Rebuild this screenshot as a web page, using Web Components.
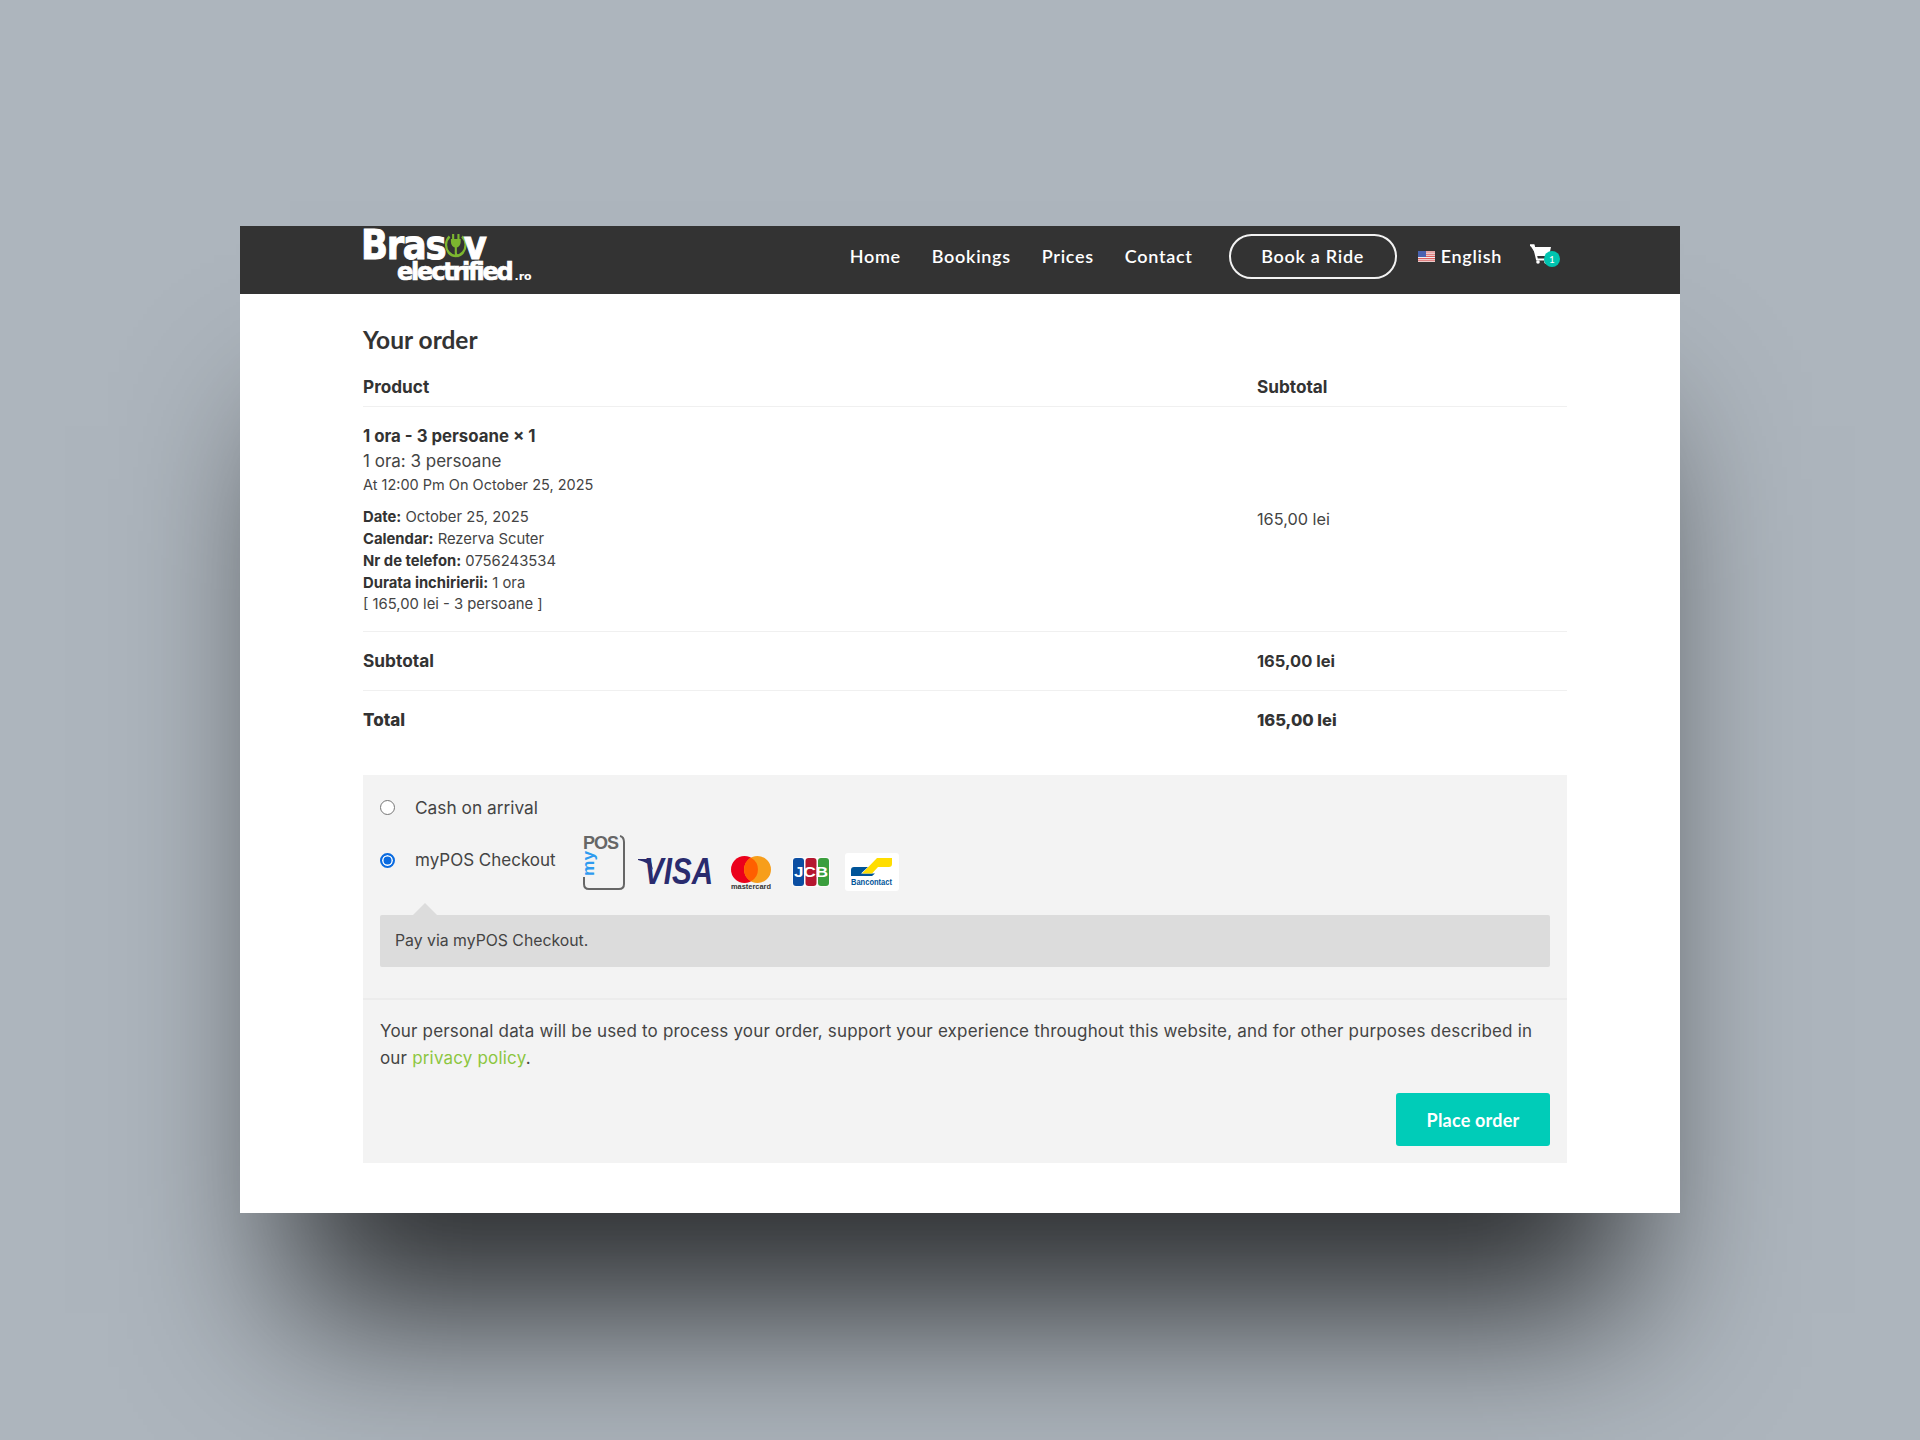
<!DOCTYPE html>
<html>
<head>
<meta charset="utf-8">
<title>Your order</title>
<style>
html,body{margin:0;padding:0;}
body{
    width:1920px;
    height:1440px;
    overflow:hidden;
    background-color:#adb5bd;
    font-family:"Inter","Liberation Sans",sans-serif;
}
</style>
</head>
<body>
<site-window>
    <site-header></site-header>
    <order-summary></order-summary>
    <checkout-payment></checkout-payment>
</site-window>

<script>
const BODY_FONT = '"Inter","Liberation Sans",sans-serif';
const NAV_FONT = '"Lato","Liberation Sans",sans-serif';

class SiteWindow extends HTMLElement{
    constructor(){
        super();
        this.shadowDOM = this.attachShadow({mode: "open"});
    }

    connectedCallback(){
        this.shadowDOM.innerHTML = `
        <style>
        :host{
            display:block;
            box-sizing:border-box;
            width:1440px;
            height:987px;
            margin:226px 0 0 240px;
            background:#fff;
            box-shadow:0 150px 150px -50px rgba(0,0,0,.74);
        }
        </style>
        <slot></slot>`;
    }
}

class SiteHeader extends HTMLElement{
    constructor(){
        super();
        this.shadowDOM = this.attachShadow({mode: "open"});
    }

    connectedCallback(){
        this.shadowDOM.innerHTML = `
        <style>
        :host{
            display:flex;
            box-sizing:border-box;
            height:68px;
            padding:0 122px 0 123px;
            background:#333;
            color:#fff;
            font-family:${NAV_FONT};
            align-items:flex-start;
        }
        .logo{
            width:170px;
            height:58px;
            margin-top:3px;
            display:flex;
            flex-direction:column;
            font-family:"DejaVu Sans",sans-serif;
            font-weight:700;
            white-space:nowrap;
        }
        .logo .big{
            font-size:40px;
            line-height:32px;
            letter-spacing:-1.5px;
            height:32px;
            margin-left:-2px;
            display:flex;
            align-items:center;
            -webkit-text-stroke:1px #fff;
            transform:scaleX(.886);
            transform-origin:left center;
        }
        .logo .big svg{margin:0 -4px 0 -1px;flex:none;}
        .logo .small{
            font-size:24px;
            line-height:21px;
            letter-spacing:-2.2px;
            margin:1px 0 0 34px;
            -webkit-text-stroke:.7px #fff;
            display:flex;
            align-items:baseline;
        }
        .logo .small i{
            font-style:normal;
            font-size:11px;
            letter-spacing:0;
            margin-left:3px;
            -webkit-text-stroke:0;
        }
        nav{
            flex:1;
            display:flex;
            align-items:center;
            justify-content:flex-end;
            height:60px;
            font-size:18px;
            font-weight:600;
            letter-spacing:.7px;
        }
        nav a{color:#fff;text-decoration:none;}
        nav a + a{margin-left:31px;}
        .book{
            box-sizing:border-box;
            width:168px;
            height:45px;
            margin-left:36px;
            border:2px solid #f2f2f2;
            border-radius:23px;
            display:flex;
            align-items:center;
            justify-content:center;
        }
        .lang{
            display:flex;
            align-items:center;
            margin-left:21px;
            gap:6px;
        }
        .cart{
            position:relative;
            width:28px;
            height:26px;
            margin-left:28px;
        }
        .cart svg{display:block;margin-top:1px;}
        .badge{
            position:absolute;
            left:14px;
            top:8px;
            width:16px;
            height:16px;
            border-radius:50%;
            background:#00c4b0;
            color:#fff;
            font:400 10px/16px ${NAV_FONT};
            letter-spacing:0;
            text-align:center;
        }
        </style>
        <div class="logo">
            <div class="big">Bras<svg width="26" height="30" viewBox="0 0 26 30"><path d="M6 6.5a11 11 0 1 0 14 0" fill="none" stroke="#7cb62f" stroke-width="2.6"/><path d="M10 4v5M16 4v5" stroke="#7cb62f" stroke-width="2.4"/><path d="M7.5 9h11v3a5.5 5.5 0 0 1-11 0z" fill="#7cb62f"/><path d="M13 16v7q0 3 3 3" fill="none" stroke="#7cb62f" stroke-width="2.4"/></svg>v</div>
            <div class="small">electrified<i>.ro</i></div>
        </div>
        <nav>
            <a>Home</a>
            <a>Bookings</a>
            <a>Prices</a>
            <a>Contact</a>
            <div class="book">Book a Ride</div>
            <div class="lang">
                <svg width="17" height="11" viewBox="0 0 17 11"><rect width="17" height="11" fill="#f1f1f1"/><path d="M0 1h17M0 3.2h17M0 5.4h17M0 7.6h17M0 9.8h17" stroke="#dc5f5f" stroke-width="1.1"/><rect width="8" height="6" fill="#4a63b0"/></svg>
                <span>English</span>
            </div>
            <div class="cart">
                <svg width="22" height="20" viewBox="0 0 22 20"><path d="M0 1h4l1 2h16l-2 9H7z" fill="#fff"/><path d="M0 1.2h3.6L7 15.5h11" fill="none" stroke="#fff" stroke-width="2"/><circle cx="8" cy="18" r="1.8" fill="#fff"/><circle cx="16" cy="18" r="1.8" fill="#fff"/></svg>
                <span class="badge">1</span>
            </div>
        </nav>`;
    }
}

class OrderSummary extends HTMLElement{
    constructor(){
        super();
        this.shadowDOM = this.attachShadow({mode: "open"});
    }

    connectedCallback(){
        this.shadowDOM.innerHTML = `
        <style>
        :host{
            display:block;
            padding:0 113px 0 123px;
            font-family:${BODY_FONT};
            color:#444;
        }
        h2{
            margin:0;
            padding-top:31px;
            height:41px;
            font-family:${NAV_FONT};
            font-size:24.5px;
            line-height:30px;
            font-weight:700;
            color:#333;
        }
        .row{
            display:grid;
            grid-template-columns:894px 1fr;
            border-bottom:1px solid #f0f0f0;
            box-sizing:border-box;
        }
        .row.head{height:41px;padding-top:9px;font-size:17.2px;font-weight:700;line-height:24px;color:#333;}
        .row.item{height:225px;align-items:center;}
        .row.sum{height:59px;padding-bottom:1px;align-items:center;font-size:17.3px;font-weight:700;color:#333;}
        .row.total{border-bottom:0;height:60px;padding-bottom:2px;align-items:center;font-size:17px;font-weight:800;color:#333;}
        .row .num{font-size:16.5px;}
        .name{font-size:16.8px;font-weight:700;line-height:24px;color:#333;}
        .sub{font-size:17px;line-height:26px;}
        .when{font-size:14.5px;line-height:22px;margin-bottom:10px;}
        .meta{font-size:14.8px;line-height:22px;}
        .meta.last{line-height:20px;}
        .meta b{color:#333;font-weight:700;}
        .price{font-size:16.3px;}
        </style>
        <h2>Your order</h2>
        <div class="row head"><div>Product</div><div>Subtotal</div></div>
        <div class="row item">
            <div>
                <div class="name">1 ora - 3 persoane &times; 1</div>
                <div class="sub">1 ora: 3 persoane</div>
                <div class="when">At 12:00 Pm On October 25, 2025</div>
                <div class="meta"><b>Date:</b> October 25, 2025</div>
                <div class="meta"><b>Calendar:</b> Rezerva Scuter</div>
                <div class="meta"><b>Nr de telefon:</b> 0756243534</div>
                <div class="meta"><b>Durata inchirierii:</b> 1 ora</div>
                <div class="meta last">[ 165,00 lei - 3 persoane ]</div>
            </div>
            <div class="price">165,00 lei</div>
        </div>
        <div class="row sum"><div>Subtotal</div><div class="num">165,00 lei</div></div>
        <div class="row total"><div>Total</div><div class="num">165,00 lei</div></div>`;
    }
}

class CheckoutPayment extends HTMLElement{
    constructor(){
        super();
        this.shadowDOM = this.attachShadow({mode: "open"});
    }

    connectedCallback(){
        this.shadowDOM.innerHTML = `
        <style>
        :host{
            display:block;
            box-sizing:border-box;
            width:1204px;
            height:388px;
            margin:24px 0 0 123px;
            background:#f3f3f3;
            font-family:${BODY_FONT};
            color:#444;
            font-size:17px;
        }
        .methods{
            box-sizing:border-box;
            height:225px;
            padding:0 17px;
            border-bottom:2px solid #ececec;
        }
        .cash{display:flex;align-items:center;height:64px;font-size:17.3px;}
        .pos{display:flex;align-items:flex-start;height:76px;}
        .radio{
            box-sizing:border-box;
            width:15px;
            height:15px;
            margin-right:20px;
            border-radius:50%;
            border:1px solid #767676;
            background:#fff;
            flex:none;
        }
        .radio.on{
            border:2px solid #0a6be0;
            box-shadow:inset 0 0 0 1.5px #fff;
            background:#0a6be0;
            margin-top:14px;
        }
        .pos .label{margin-top:9px;width:167px;line-height:24px;white-space:nowrap;}
        .icons{display:flex;align-items:flex-start;margin-top:-5px;}
        .icons svg{display:block;flex:none;overflow:visible;}
        .notice{
            position:relative;
            box-sizing:border-box;
            height:52px;
            padding:0 15px;
            background:#dcdcdc;
            border-radius:2px;
            font-size:15.8px;
            line-height:52px;
        }
        .notice::before{
            content:"";
            position:absolute;
            left:33px;
            top:-12px;
            border-left:12px solid transparent;
            border-right:12px solid transparent;
            border-bottom:12px solid #dcdcdc;
        }
        .terms{
            padding:18px 17px 0;
            line-height:27px;
            font-size:17px;
            letter-spacing:.18px;
        }
        .terms a{color:#8cc63f;text-decoration:none;}
        .actions{display:flex;justify-content:flex-end;margin-top:21px;padding:0 17px;}
        button{
            width:154px;
            height:53px;
            border:0;
            border-radius:3px;
            background:#00ccb8;
            color:#fff;
            font-family:${NAV_FONT};
            font-size:18px;
            letter-spacing:.2px;
            font-weight:700;
        }
        </style>
        <div class="methods">
            <div class="cash"><span class="radio"></span><span>Cash on arrival</span></div>
            <div class="pos">
                <span class="radio on"></span>
                <span class="label">myPOS Checkout</span>
                <div class="icons">
                    <svg width="44" height="56" viewBox="0 0 44 56">
                        <path d="M38 2q4 1 4 6v42q0 5-5 5H7q-5 0-5-5v-7" fill="none" stroke="#666" stroke-width="2"/>
                        <text x="1" y="15" font-family="Liberation Sans" font-size="18" font-weight="700" fill="#666" textLength="36">POS</text>
                        <text transform="translate(12,42) rotate(-90)" font-family="Liberation Sans" font-size="17" font-weight="700" fill="#2e9bf0" textLength="25" lengthAdjust="spacingAndGlyphs">my</text>
                    </svg>
                    <svg width="75" height="28" viewBox="0 0 75 28" style="margin:24px 0 0 12px">
                        <path d="M0 1h9q3 0 4 3l2 8Q11 4 0 2z" fill="#2a2b6e"/>
                        <text x="6" y="26" font-family="Liberation Sans" font-size="36" font-weight="700" font-style="italic" fill="#2a2b6e" textLength="69" lengthAdjust="spacingAndGlyphs">VISA</text>
                    </svg>
                    <svg width="40" height="34" viewBox="0 0 40 34" style="margin:22px 0 0 18px">
                        <circle cx="13.5" cy="13.5" r="13.5" fill="#eb001b"/>
                        <circle cx="26.5" cy="13.5" r="13.5" fill="#f79e1b"/>
                        <path d="M20 1.7a13.5 13.5 0 0 1 0 23.6a13.5 13.5 0 0 1 0-23.6" fill="#ff5f00"/>
                        <text x="0" y="33" font-family="Liberation Sans" font-size="7" font-weight="700" fill="#333" textLength="40" lengthAdjust="spacingAndGlyphs">mastercard</text>
                    </svg>
                    <svg width="38" height="30" viewBox="0 0 38 30" style="margin:23px 0 0 21px">
                        <rect x="0" y="0" width="38" height="30" rx="3" fill="#fbfbfb"/>
                        <rect x="1" y="1" width="11" height="28" rx="3" fill="#0b4ea2"/>
                        <rect x="13.5" y="1" width="11" height="28" rx="3" fill="#b5172f"/>
                        <rect x="26" y="1" width="11" height="28" rx="3" fill="#3a9e3d"/>
                        <text x="2" y="20" font-family="Liberation Sans" font-size="15" font-weight="700" fill="#fff" textLength="34" lengthAdjust="spacingAndGlyphs">JCB</text>
                    </svg>
                    <svg width="54" height="38" viewBox="0 0 54 38" style="margin:19px 0 0 15px">
                        <rect width="54" height="38" rx="3" fill="#fff"/>
                        <path d="M6 23V17q0-3 3-3h14l-7 6.5h14l-3 2.5z" fill="#005498"/>
                        <path d="M32 5h15v6q0 3-3 3H33l-6 6.5H17z" fill="#fd0"/>
                        <text x="6" y="32" font-family="Liberation Sans" font-size="9" font-weight="700" fill="#005498" textLength="41" lengthAdjust="spacingAndGlyphs">Bancontact</text>
                    </svg>
                </div>
            </div>
            <div class="notice">Pay via myPOS Checkout.</div>
        </div>
        <div class="terms">Your personal data will be used to process your order, support your experience throughout this website, and for other purposes described in our <a>privacy policy</a>.</div>
        <div class="actions"><button>Place order</button></div>`;
    }
}

customElements.define("site-window", SiteWindow);
customElements.define("site-header", SiteHeader);
customElements.define("order-summary", OrderSummary);
customElements.define("checkout-payment", CheckoutPayment);
</script>
</body>
</html>
